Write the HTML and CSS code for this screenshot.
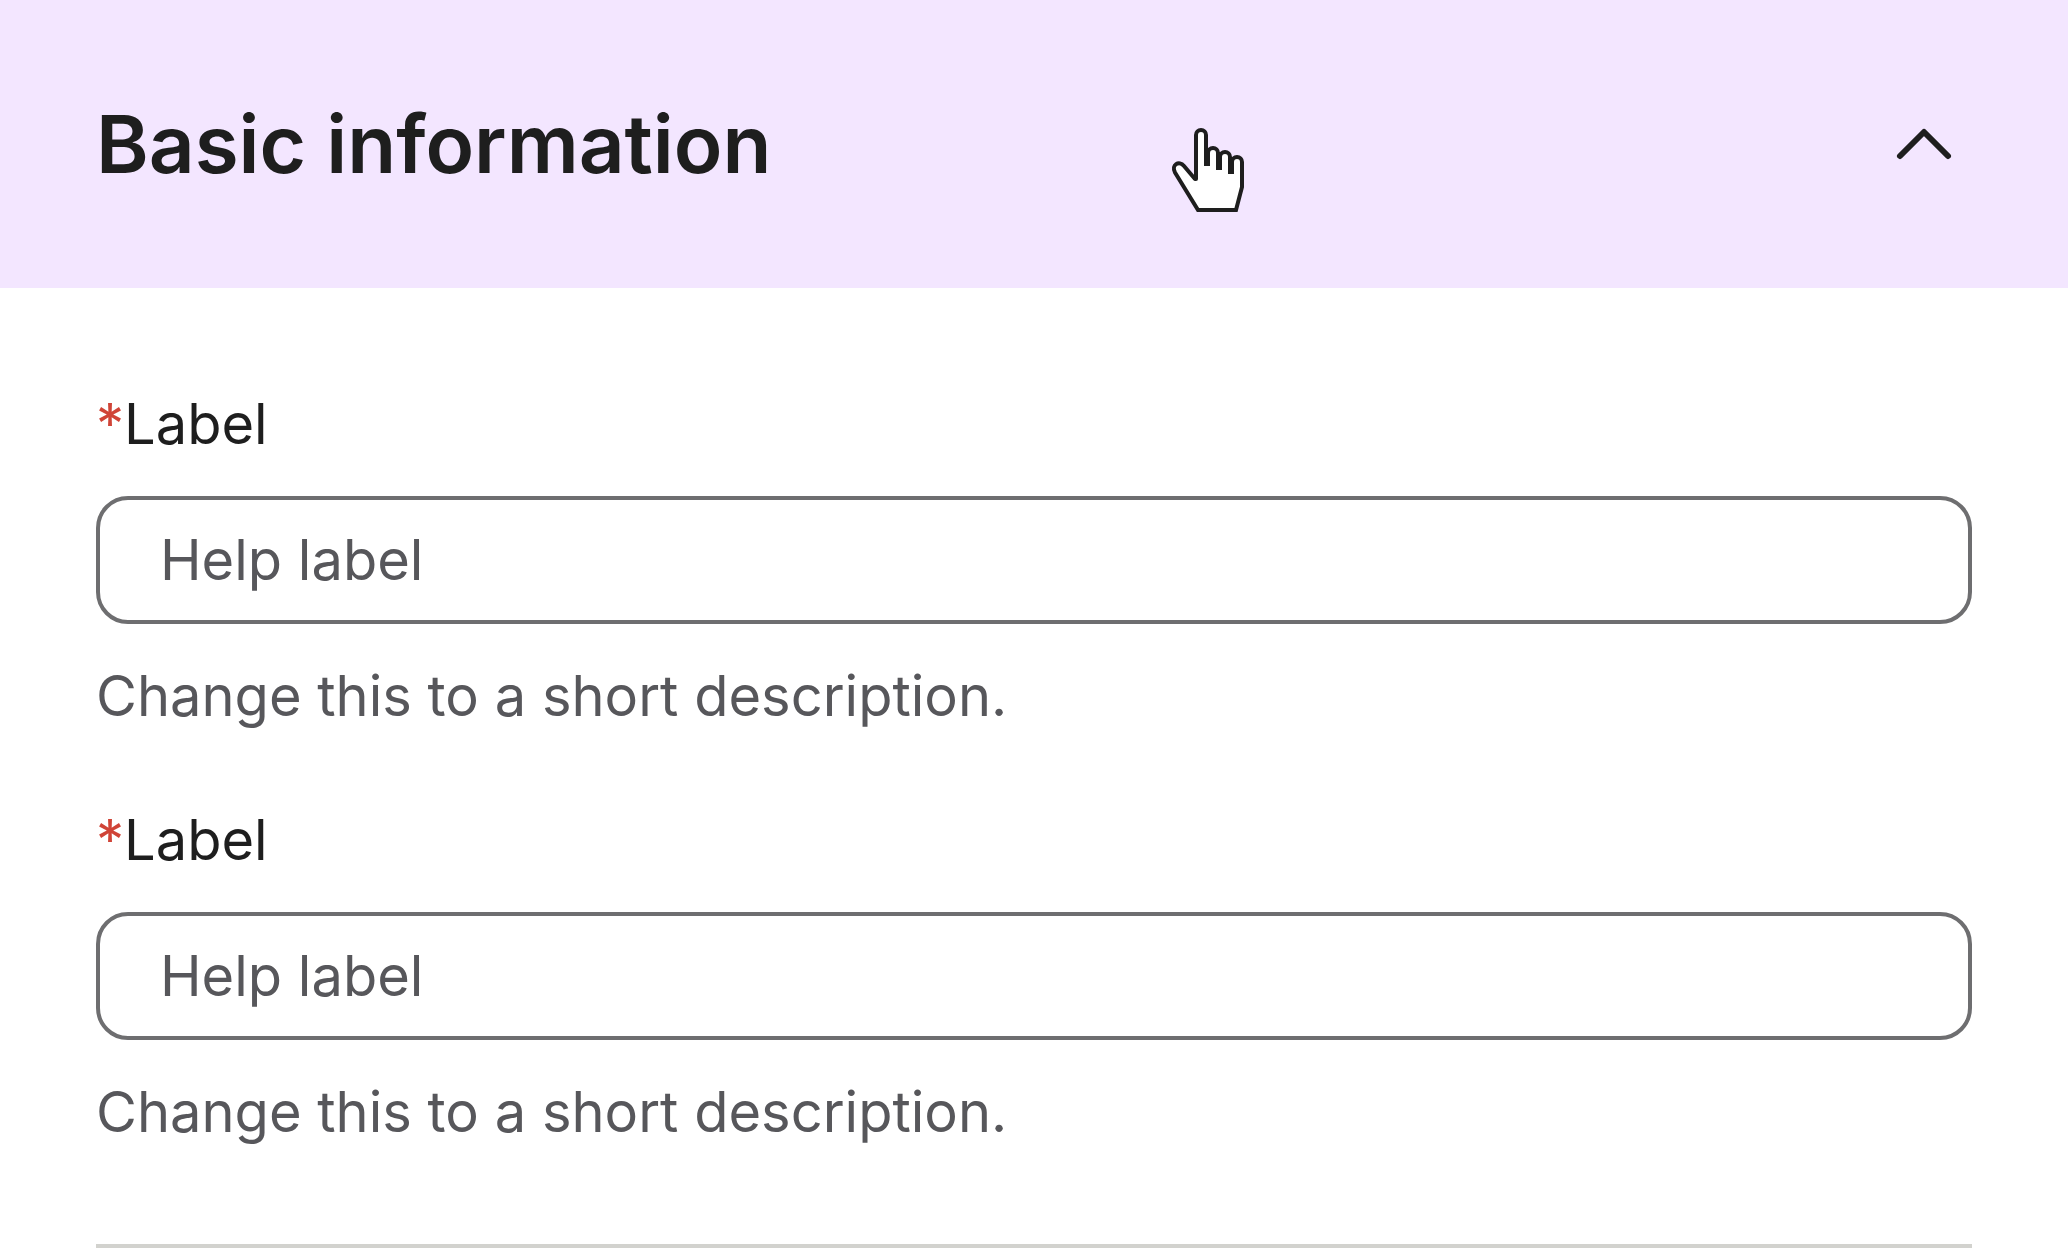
FILE: index.html
```html
<!DOCTYPE html>
<html lang="en">
<head>
  <meta charset="UTF-8">
  <meta name="viewport" content="width=device-width, initial-scale=1.0">
  <title>Basic information</title>
  <link rel="stylesheet" href="styles.css">
</head>
<body>

<section class="accordion">
  <h2 class="accordion-heading">
    <button type="button" class="accordion-header" aria-expanded="true" aria-controls="basic-info">
      Basic information
      <svg class="chevron" viewBox="0 0 64 64" aria-hidden="true">
        <path d="M8 44L32 20L56 44"/>
      </svg>
    </button>
  </h2>

  <!-- Pointer over the header -->
  <svg class="pointer" viewBox="0 0 120 120" aria-hidden="true">
    <path d="M46 69V25a5 5 0 0 1 10 0V54H58V43a5 5 0 0 1 10 0V58H70V47a5 5 0 0 1 10 0V62H82V52a5 5 0 0 1 10 0V77L86 100H48L25 62.5C21 55 29 50 34 56L45 69"/>
  </svg>

  <form id="basic-info" class="accordion-body">
    <div class="field">
      <label for="input-one"><span class="required">*</span>Label</label>
      <input type="text" id="input-one" placeholder="Help label" aria-describedby="hint-one">
      <p id="hint-one" class="hint">Change this to a short description.</p>
    </div>
    <div class="field">
      <label for="input-two"><span class="required">*</span>Label</label>
      <input type="text" id="input-two" placeholder="Help label" aria-describedby="hint-two">
      <p id="hint-two" class="hint">Change this to a short description.</p>
    </div>
  </form>
  <hr class="divider">
</section>

</body>
</html>
```
FILE: styles.css
```css
* {
  margin: 0;
  padding: 0;
  box-sizing: border-box;
}

body {
  background-color: #fff;
  color: #1e1e1e;
  font-family: Inter, "Liberation Sans", sans-serif;
  font-size: 56px;
  line-height: 80px;
}

.accordion {
  position: relative;
}

/* Header */
.accordion-header {
  display: flex;
  justify-content: space-between;
  align-items: center;
  width: 100%;
  padding: 96px 112px 96px 96px;
  border: none;
  background-color: #f3e6ff;
  color: #1e1e1e;
  font: inherit;
  font-size: 80px;
  font-weight: 600;
  line-height: 96px;
  text-align: left;
  cursor: pointer;
}

.chevron {
  width: 64px;
  height: 64px;
  fill: none;
  stroke: #1e1e1e;
  stroke-width: 6;
  stroke-linecap: round;
  stroke-linejoin: round;
}

.pointer {
  position: absolute;
  top: 110px;
  left: 1150px;
  width: 120px;
  height: 120px;
  fill: #fff;
  stroke: #1e1e1e;
  stroke-width: 4;
  stroke-linecap: round;
  pointer-events: none;
}

/* Form */
.accordion-body {
  display: flex;
  flex-direction: column;
  gap: 64px;
  padding: 96px 96px 92px;
}

.field {
  display: flex;
  flex-direction: column;
  gap: 32px;
}

.required {
  color: #d04437;
}

input {
  width: 100%;
  height: 128px;
  padding: 0 60px;
  border: 4px solid #6e6e70;
  border-radius: 32px;
  background-color: #fff;
  color: #1e1e1e;
  font: inherit;
}

input::placeholder {
  color: #57575b;
  opacity: 1;
}

.hint {
  color: #57575b;
}

.divider {
  height: 4px;
  margin: 0 96px;
  border: none;
  background-color: #d2d2ce;
}
```
